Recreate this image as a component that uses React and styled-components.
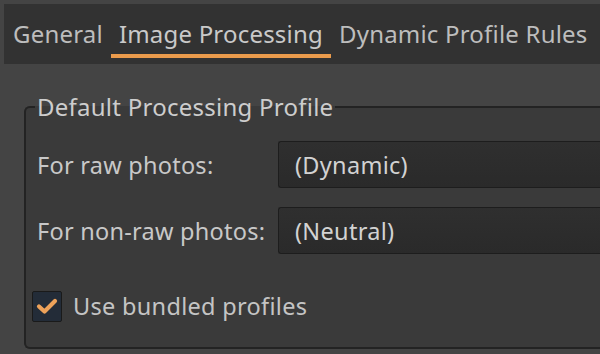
import styled, { createGlobalStyle } from "styled-components";

const GlobalStyle = createGlobalStyle`
  html, body {
    margin: 0;
    padding: 0;
    background: #444444;
    overflow: hidden;
  }
  body {
    font-family: "Noto Sans", "Open Sans", sans-serif;
    color: #c6c6c6;
  }
`;

const App = () => {
  const tabs = ["General", "Image Processing", "Dynamic Profile Rules"];
  const active = 1;

  return (
    <Window>
      <GlobalStyle />
      <TabBar>
        {tabs.map((t, i) => (
          <Tab key={t} $active={i === active}>
            {t}
          </Tab>
        ))}
      </TabBar>

      <Page>
        <Frame>
          <Legend>Default Processing Profile</Legend>
          <Row>
            <Label>For raw photos:</Label>
            <Combo>(Dynamic)</Combo>
          </Row>
          <Row $gap>
            <Label>For non-raw photos:</Label>
            <Combo>(Neutral)</Combo>
          </Row>
          <CheckRow>
            <Check>
              <svg width="22" height="18" viewBox="0 0 22 18">
                <path
                  d="M3 9.5 L8.5 14.5 L19 4"
                  fill="none"
                  stroke="#eda25a"
                  strokeWidth="4.2"
                  strokeLinecap="round"
                  strokeLinejoin="round"
                />
              </svg>
            </Check>
            <CheckLabel>Use bundled profiles</CheckLabel>
          </CheckRow>
        </Frame>
      </Page>
    </Window>
  );
};

export default App;

const Window = styled.div`
  width: 600px;
  height: 354px;
  padding: 4px 0 0 4px;
  box-sizing: border-box;
  overflow: hidden;
`;

const TabBar = styled.div`
  display: flex;
  align-items: flex-start;
  height: 60px;
  padding-left: 1px;
  background: #323232;
  white-space: nowrap;
`;

const Tab = styled.div`
  padding: 14px 8px 5px;
  font-size: 24px;
  letter-spacing: 0.2px;
  line-height: 31px;
  color: ${(p) => (p.$active ? "#c9c9c9" : "#bdbdbd")};
  border-bottom: 4px solid ${(p) => (p.$active ? "#eb9b4c" : "transparent")};
`;

const Page = styled.div`
  padding: 27px 0 0 20px;
`;

const Frame = styled.fieldset`
  margin: 0;
  padding: 19px 0 25px 11px;
  border: 2px solid #232323;
  border-right: none;
  border-radius: 6px 0 0 6px;
  background: #3a3a3a;
  min-width: 0;
`;

const Legend = styled.legend`
  margin-left: -2px;
  padding: 0 2px;
  font-size: 24px;
  letter-spacing: 0.25px;
  line-height: 31px;
  color: #cdcdcd;
`;

const Row = styled.div`
  display: grid;
  grid-template-columns: 241px 1fr;
  align-items: center;
  margin-top: ${(p) => (p.$gap ? "19px" : "0")};
`;

const Label = styled.span`
  font-size: 23.5px;
  letter-spacing: 0.25px;
  color: #c8c8c8;
`;

const Combo = styled.div`
  height: 45px;
  display: flex;
  align-items: center;
  padding-left: 16px;
  font-size: 23.5px;
  letter-spacing: 0.3px;
  color: #d2d2d2;
  background: linear-gradient(#2f2f2f, #2a2a2a);
  border: 1px solid #1d1d1d;
  border-right: none;
  border-radius: 3px 0 0 3px;
`;

const CheckRow = styled.div`
  display: flex;
  align-items: center;
  gap: 11px;
  margin-top: 36px;
`;

const Check = styled.div`
  width: 28px;
  height: 29px;
  margin-left: -5px;
  display: flex;
  align-items: center;
  justify-content: center;
  background: #232c38;
  border: 1px solid #1a1a1a;
  border-radius: 2px;
`;

const CheckLabel = styled.span`
  font-size: 23.5px;
  letter-spacing: 0.3px;
  color: #c4c4c4;
`;
